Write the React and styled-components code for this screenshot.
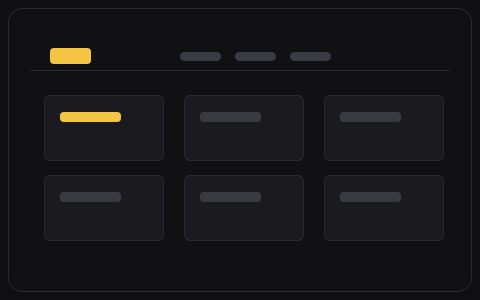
import styled, { createGlobalStyle } from "styled-components";

const GlobalStyle = createGlobalStyle`
  html, body {
    margin: 0;
    padding: 0;
    background: #0f0f11;
    font-family: "Inter", "Liberation Sans", sans-serif;
  }
  * {
    box-sizing: border-box;
  }
`;

const Frame = styled.div`
  margin: 8px;
  width: 464px;
  height: 284px;
  border: 1px solid #2b2b2f;
  border-radius: 14px;
  background: #111113;
  padding-top: 39px;
`;

const Nav = styled.nav`
  display: flex;
  align-items: center;
  margin: 0 21px;
  padding: 0 0 6px 20px;
  border-bottom: 1px solid #2a2a2e;
`;

const Tab = styled.div`
  width: 41px;
  height: 16px;
  border-radius: 4px;
  background: #f4c545;
`;

const Links = styled.div`
  display: flex;
  gap: 14px;
  margin-left: 89px;
`;

const Link = styled.div`
  width: 41px;
  height: 9px;
  border-radius: 5px;
  background: #3a3a42;
`;

const Grid = styled.div`
  display: grid;
  grid-template-columns: repeat(3, 120px);
  grid-auto-rows: 66px;
  column-gap: 20px;
  row-gap: 14px;
  margin: 24px 0 0 35px;
`;

const Card = styled.div`
  border: 1px solid #2a2a30;
  border-radius: 6px;
  background: #1b1b1f;
  padding: 16px 15px;
`;

const Bar = styled.div`
  width: 61px;
  height: 10px;
  border-radius: 4px;
  background: ${({ $active }) => ($active ? "#f4c545" : "#3a3a42")};
`;

const cards = [true, false, false, false, false, false];

export default function App() {
  return (
    <>
      <GlobalStyle />
      <Frame>
        <Nav>
          <Tab />
          <Links>
            <Link />
            <Link />
            <Link />
          </Links>
        </Nav>
        <Grid>
          {cards.map((active, i) => (
            <Card key={i}>
              <Bar $active={active} />
            </Card>
          ))}
        </Grid>
      </Frame>
    </>
  );
}
